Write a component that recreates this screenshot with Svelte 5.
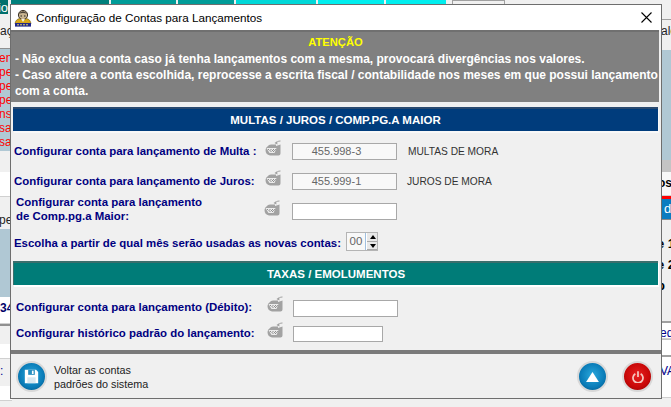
<script>
  const tabs = [
    { w: 8, c: '#00706c' }, { w: 3, c: '#f0f0f0' }, { w: 98, c: '#00807c' }, { w: 2, c: '#f0f0f0' },
    { w: 65, c: '#009c98' }, { w: 2, c: '#f0f0f0' }, { w: 56, c: '#009c98' }, { w: 2, c: '#f0f0f0' },
    { w: 80, c: '#00d8d8' }, { w: 2, c: '#f0f0f0' }, { w: 66, c: '#00eeee' }, { w: 2, c: '#f0f0f0' },
    { w: 60, c: '#00eeee' }
  ];
  const reds = ['en', 'pe', 'pe', 'pe', 'ns', 'sa', 'sa'];
</script>

{#snippet acct()}
  <svg class="acct" width="17" height="17" viewBox="0 0 17 17" aria-hidden="true">
    <path d="M11 3.5 C11.5 2 13 1 15.5 1" fill="none" stroke="#a0a0a0" stroke-width="1" />
    <path d="M9.5 3 L12 1.2 L12.5 4.5 Z" fill="#a0a0a0" />
    <path d="M3 6 Q3.5 4.5 6 4.5 L11 4.5 L11 6 L15.5 4.5 L15.5 13.5 Q15.5 15.5 13.5 15.5 L5 15.5 Q0.5 14.5 0.5 10 Q0.5 7.5 3 6 Z" fill="#a2a2a2" />
    <path d="M1.5 8 L11.5 8 L9.5 13 L4.5 13 Z" fill="#ececec" />
    <path d="M3 9.5h1M5.5 9.5h1M8 9.5h1M10 9.5h.8M4.5 10.5h1M7 10.5h1M9 10.5h.8M5.5 11.5h1M8 11.5h1" stroke="#8c8c8c" stroke-width="1" />
  </svg>
{/snippet}

<div class="desk">
  <div class="tabs">
    {#each tabs as t}
      <i style="width:{t.w}px;background:{t.c}"></i>
    {/each}
    <i class="tab-off"></i>
  </div>

  <div class="side left">
    <div class="s-teal">io</div>
    <div class="s-plain h-top">aç</div>
    <div class="s-blue">
      {#each reds as r}<span>{r}</span>{/each}
    </div>
    <div class="s-plain" style="height:21px"></div>
    <div class="s-white" style="height:25px"></div>
    <div class="s-plain s-black" style="height:32px">pe</div>
    <div class="s-blue" style="height:68px;padding:0"></div>
    <div class="s-white s-bold" style="height:27px">34</div>
    <div class="s-plain s-line" style="height:20px"></div>
    <div class="s-white" style="height:15px"></div>
    <div class="s-plain s-link" style="height:27px">:</div>
    <div class="s-white" style="height:15px"></div>
  </div>

  <div class="side right">
    <div class="s-plain r-top">alo</div>
    <div class="s-blue" style="height:110px;padding:0"></div>
    <div class="r-grey"></div>
    <div class="s-white s-bold" style="height:24px">os</div>
    <div class="r-red"></div>
    <div class="r-btn">d</div>
    <div class="r-bold first">e 1</div>
    <div class="r-bold">e 2</div>
    <div class="r-bold">p</div>
    <div class="s-plain" style="height:26px"></div>
    <div class="s-white r-row s-link">edi</div>
    <div class="s-white r-row2"></div>
    <div class="s-white r-row va s-link">VA</div>
    <div class="s-white" style="height:25px"></div>
  </div>

  <div class="win">
    <div class="title">
      <svg width="18" height="18" viewBox="0 0 18 18" aria-hidden="true">
        <path d="M1 15 Q1.5 10 6 9.5 L12 9.5 Q16.5 10 17 15 Z" fill="#d8a818" stroke="#6a5a10" stroke-width=".6" />
        <circle cx="9" cy="6" r="4.6" fill="#c8b490" stroke="#3c3428" stroke-width="1" />
        <path d="M4.6 5 Q9 -0.5 13.4 5 Q9 3 4.6 5 Z" fill="#4a4238" />
        <path d="M6.5 7h1.5M10 7h1.5" stroke="#222" stroke-width="1" />
        <path d="M7 10 L9 13 L11 10 Z" fill="#f4f0e0" />
        <rect x="1" y="14" width="16" height="3.6" fill="#20288c" />
        <path d="M3 15.8h12" stroke="#e8d860" stroke-width="1" stroke-dasharray="2 1" />
      </svg>
      <span>Configuração de Contas para Lançamentos</span>
      <svg class="close" width="11" height="11" viewBox="0 0 11 11" aria-hidden="true">
        <path d="M0.5 0.5 L10.5 10.5 M10.5 0.5 L0.5 10.5" stroke="#000" stroke-width="1.1" fill="none" />
      </svg>
    </div>

    <div class="notice">
      <h2>ATENÇÃO</h2>
      <p>- Não exclua a conta caso já tenha lançamentos com a mesma, provocará divergências nos valores.</p>
      <p>- Caso altere a conta escolhida, reprocesse a escrita fiscal / contabilidade nos meses em que possui lançamento com a conta.</p>
    </div>

    <div class="bar navy">MULTAS / JUROS / COMP.PG.A MAIOR</div>

    <div class="row r1">
      <label class="lab">Configurar conta para lançamento de Multa :</label>
      {@render acct()}
      <input class="val" value="455.998-3" readonly />
      <span class="name">MULTAS DE MORA</span>
    </div>
    <div class="row r2">
      <label class="lab">Configurar conta para lançamento de Juros:</label>
      {@render acct()}
      <input class="val" value="455.999-1" readonly />
      <span class="name n2">JUROS DE MORA</span>
    </div>
    <div class="row r3">
      <label class="lab two">Configurar conta para lançamento<br />de Comp.pg.a Maior:</label>
      {@render acct()}
      <input class="val" readonly />
    </div>
    <div class="row r4">
      <label class="lab">Escolha a partir de qual mês serão usadas as novas contas:</label>
      <div class="spin">
        <span class="num">00</span>
        <span class="arrows"><b class="up"></b><b class="down"></b></span>
      </div>
    </div>

    <div class="bar teal">TAXAS / EMOLUMENTOS</div>

    <div class="row r5">
      <label class="lab two">Configurar conta para lançamento (Débito):</label>
      {@render acct()}
      <input class="val" readonly />
    </div>
    <div class="row r6">
      <label class="lab two">Configurar histórico padrão do lançamento:</label>
      {@render acct()}
      <input class="val short" readonly />
    </div>

    <div class="foot">
      <button class="round blue" aria-label="Voltar as contas padrões do sistema">
        <svg width="15" height="15" viewBox="0 0 18 18" aria-hidden="true">
          <path d="M1 1 H14.5 L17 3.5 V17 H1 Z" fill="#fff" />
          <rect x="5" y="1" width="8" height="6" fill="#2a8fc0" />
          <rect x="9.5" y="2" width="2" height="4" fill="#fff" />
          <rect x="4" y="10" width="10" height="7" fill="#d8e8f0" />
        </svg>
      </button>
      <div class="foot-txt">Voltar as contas<br />padrões do sistema</div>
      <button class="round blue up-btn" aria-label="Subir">
        <svg width="13" height="10" viewBox="0 0 18 14" aria-hidden="true"><path d="M9 0 L18 14 H0 Z" fill="#fff" /></svg>
      </button>
      <button class="round red" aria-label="Sair">
        <svg width="12" height="12" viewBox="0 0 18 18" aria-hidden="true">
          <path d="M5 4 A7.5 7.5 0 1 0 13 4" fill="none" stroke="#f4c8c0" stroke-width="2.6" />
          <path d="M9 0.5 V9" stroke="#f4c8c0" stroke-width="2.6" />
        </svg>
      </button>
    </div>
  </div>
</div>

<style>
  :global(body) {
    margin: 0;
    background: #f0f0f0;
    font-family: "Liberation Sans", Arial, sans-serif;
  }

  .desk {
    position: relative;
    width: 671px;
    height: 407px;
    overflow: hidden;
    background: #f0f0f0;
  }

  .tabs {
    display: flex;
    height: 5px;
  }
  .tabs i {
    display: block;
    flex: none;
  }
  .tabs .tab-off {
    width: 53px;
    margin-left: 6px;
    border: 1px solid #a0a0a0;
    border-bottom: 0;
    box-sizing: border-box;
  }

  /* the main screen that shows on both sides of the dialog */
  .side {
    position: absolute;
    top: 0;
    width: 12px;
    font-size: 12px;
    overflow: hidden;
    white-space: nowrap;
  }
  .left { left: 0; text-align: right; }
  .right { left: 661px; width: 10px; }

  .s-teal {
    height: 14px;
    background: #00706c;
    color: #fff;
    font-size: 13px;
    line-height: 16px;
    width: 8px;
    direction: rtl;
    overflow: hidden;
  }
  .s-plain { background: #f0f0f0; color: #222; box-sizing: border-box; }
  .h-top { height: 35px; padding-top: 10px; border-bottom: 1px solid #909090; text-align: left; }
  .s-blue {
    height: 100px;
    background: #b0c8d4;
    color: #f00;
    padding-top: 2px;
    box-sizing: content-box;
  }
  .s-blue span {
    display: block;
    height: 14px;
    line-height: 14px;
    text-align: left;
    margin-left: -1px;
  }
  .s-white { background: #fff; border-bottom: 1px solid #d0d0d0; box-sizing: border-box; }
  .s-black { padding-top: 14px; line-height: 18px; text-align: left; margin-left: -1px; }
  .s-bold { font-weight: bold; color: #000068; line-height: 22px; text-align: right; }
  .s-line { border-top: 2px solid #909090; }
  .s-link { color: #000090; line-height: 24px; text-align: left; }

  .r-top {
    text-align: left;
    border-top: 1px solid #a0a0a0;
    margin-top: 19px;
    height: 31px;
    padding-top: 4px;
  }
  .r-grey { height: 12px; background: #c4c4c4; }
  .right .s-bold { color: #000; text-align: left; margin-left: -3px; background: #f8f8f8; }
  .r-red { height: 3px; background: #f00; }
  .r-btn {
    height: 20px;
    background: #0a7cc0;
    color: #fff;
    font-size: 13px;
    line-height: 19px;
    padding-left: 3px;
    border-bottom: 1px solid #888;
    box-sizing: content-box;
  }
  .r-bold {
    height: 21px;
    font-weight: bold;
    line-height: 21px;
    margin-left: -4px;
    font-size: 13px;
  }
  .r-bold.first { margin-top: 13px; }
  .r-row { height: 18px; border-top: 2px solid #a0a0a0; margin-top: -1px; line-height: 20px; margin-left: -1px; }
  .r-row.va { line-height: 28px; }
  .r-row2 { height: 17px; border-top: 1px solid #c0c0c0; }

  /* dialog */
  .win {
    position: absolute;
    left: 10px;
    top: 4px;
    width: 652px;
    height: 395px;
    box-sizing: border-box;
    border: 1px solid #6e6e6e;
    background: #f0f0f0;
    display: flex;
    flex-direction: column;
  }

  .title {
    height: 25px;
    flex: none;
    background: #fff;
    display: flex;
    align-items: center;
    padding-left: 3px;
    gap: 4px;
    font-size: 11.7px;
    color: #000;
  }
  .close { margin-left: auto; margin-right: 9px; }

  .notice {
    flex: none;
    height: 72px;
    box-sizing: border-box;
    width: 648px;
    background: #808080;
    color: #fff;
    border-top: 2px solid #707070;
    padding: 2px 0 0 4px;
    font-size: 12px;
    font-weight: bold;
    line-height: 16px;
  }
  .notice h2 {
    margin: 0 0 1px;
    padding-right: 3px;
    font-size: 11.2px;
    line-height: 16px;
    color: #ff0;
    text-align: center;
  }
  .notice p { margin: 0; }

  .bar {
    flex: none;
    width: 645px;
    height: 24px;
    box-sizing: border-box;
    margin-left: 2px;
    color: #fff;
    font-size: 11.5px;
    font-weight: bold;
    text-align: center;
    line-height: 22px;
  }
  .navy {
    margin-top: 5px;
    background: #003c7c;
    border-top: 2px solid #2a4a70;
    box-shadow: 1px 2px 0 #f8f8f8;
  }
  .teal {
    margin-top: 8px;
    background: #007c78;
    border-top: 2px solid #3a6e6c;
    border-left: 1px solid #3a6e6c;
    box-shadow: 1px 2px 0 #fff;
  }

  .row {
    flex: none;
    display: flex;
    align-items: center;
    color: #000080;
  }
  .lab {
    flex: none;
    font-weight: bold;
    font-size: 11.43px;
    line-height: 14px;
    margin-left: 3px;
    white-space: nowrap;
  }
  .lab.two { margin-left: 5px; }

  .acct { flex: none; margin-bottom: 6px; }

  .val {
    flex: none;
    width: 105px;
    height: 17px;
    box-sizing: border-box;
    border: 1px solid #a8a8a8;
    background: #f8f8f8;
    text-align: center;
    font: 11px "Liberation Sans", Arial, sans-serif;
    color: #666;
    padding: 0 16px 0 0;
    border-radius: 0;
    outline: 0;
  }
  .val.short { width: 90px; }
  .name { font-size: 10.2px; color: #333; margin-left: 11px; }
  .name.n2 { margin-left: 10px; }

  .r1 { height: 28px; margin-top: 6px; }
  .r1 .lab { width: 251px; }
  .r1 .val { margin-left: 10px; }
  .r2 { height: 28px; margin-top: 2px; }
  .r2 .lab { width: 251px; }
  .r2 .val { margin-left: 10px; }
  .r3 { height: 32px; }
  .r3 .lab { width: 248px; margin-bottom: 4px; }
  .r3 .val { margin-left: 11px; background: #fff; }
  .r4 { height: 21px; margin-top: 5px; }

  .spin {
    display: flex;
    margin-left: 5px;
    margin-bottom: 2px;
    width: 32px;
    height: 19px;
    box-sizing: border-box;
    border: 1px solid #b4b4b4;
    background: #f8f8f8;
  }
  .num {
    width: 18px;
    text-align: center;
    font-size: 11.5px;
    line-height: 17px;
    color: #666;
    border-right: 1px solid #a0c0e0;
  }
  .arrows {
    flex: 1;
    display: flex;
    flex-direction: column;
    background: #e8e8e8;
    border-left: 1px solid #fff;
  }
  .arrows b {
    flex: 1;
    position: relative;
    border-bottom: 1px solid #aaa;
  }
  .arrows b::after {
    content: "";
    position: absolute;
    left: 3px;
    top: 2px;
    border-left: 3px solid transparent;
    border-right: 3px solid transparent;
  }
  .up::after { border-bottom: 4px solid #000; }
  .down::after { border-top: 4px solid #000; }

  .r5 { height: 26px; margin-top: 9px; }
  .r5 .lab { width: 251px; }
  .r5 .val { margin-left: 9px; margin-top: 2px; background: #fff; }
  .r6 { height: 26px; }
  .r6 .lab { width: 251px; }
  .r6 .val { margin-left: 9px; margin-top: 1px; height: 16px; background: #fff; }

  .foot {
    margin-top: auto;
    height: 48px;
    flex: none;
    box-sizing: border-box;
    border-top: 4px solid #7a7a7a;
    display: flex;
    align-items: center;
    padding: 1px 0 0 5px;
  }
  .foot-txt {
    margin-left: 7px;
    font-size: 10.8px;
    line-height: 14px;
    color: #222;
  }

  .round {
    flex: none;
    width: 31px;
    height: 31px;
    padding: 0;
    border-radius: 50%;
    border: 2px solid #d8d8d8;
    display: flex;
    align-items: center;
    justify-content: center;
    box-sizing: border-box;
  }
  .blue { background: radial-gradient(circle at 50% 45%, #2aa8dc 0, #0a7cb8 60%, #04507c 100%); }
  .red { background: radial-gradient(circle at 50% 45%, #e82020 0, #c80808 60%, #800404 100%); margin-left: 14px; }
  .up-btn { margin-left: auto; }
  .foot .red { margin-right: 8px; }
</style>
